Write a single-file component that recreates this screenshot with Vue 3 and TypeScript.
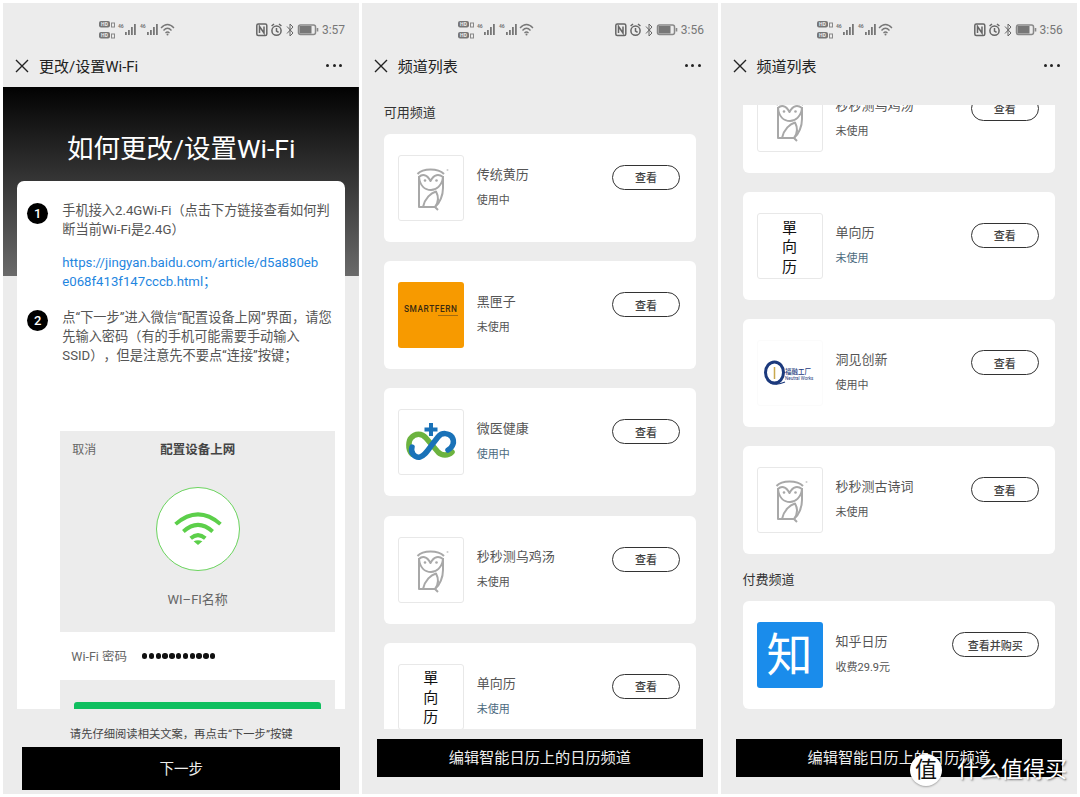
<template>
  <div class="page">
    <section v-for="phone in phones" :key="phone.id" class="phone">
      <div class="status">
        <svg class="status-left" width="76" height="22" viewBox="0 0 76 22">
          <g v-for="y in [2, 13]" :key="y">
            <rect x="0" :y="y" width="11" height="6.5" rx="2" fill="#777" />
            <text x="5.5" :y="y + 5" class="hd">HD</text>
            <rect x="12.5" :y="y + 2" width="3" height="4" fill="none" stroke="#888" stroke-width="1" />
          </g>
          <g v-for="x in [19, 41]" :key="x" fill="#777">
            <text :x="x" y="9" class="net">46</text>
            <rect :x="x + 7" y="13" width="1.8" height="3" />
            <rect :x="x + 10" y="11" width="1.8" height="5" />
            <rect :x="x + 13" y="8" width="1.8" height="8" />
            <rect :x="x + 16" y="5" width="1.8" height="11" />
          </g>
          <g fill="none" stroke="#777" stroke-width="1.3">
            <path d="M62 9 Q68.5 2 75 9" />
            <path d="M64.5 11.5 Q68.5 7 72.5 11.5" />
            <path d="M66.5 14 Q68.5 12 70.5 14" />
          </g>
          <circle cx="68.5" cy="15.5" r="1" fill="#777" />
        </svg>
        <div class="status-right">
          <svg width="64" height="16" viewBox="0 0 64 16">
            <g fill="none" stroke="#666" stroke-width="1.5">
              <rect x="0.8" y="2" width="10" height="11.5" rx="1.5" />
              <path d="M3.5 11 V4.5 L8 11 V4.5" />
              <circle cx="20.5" cy="8.7" r="4.6" />
              <path d="M20.5 6 V9 L22.6 10.4 M15.6 4 L18 2 M25.4 4 L23 2" />
              <path d="M31 4.5 L37 11 L34 14 V2 L37 5 L31 11.5" stroke-width="1" />
              <rect x="42.5" y="3" width="17" height="9.5" rx="2" stroke="#888" />
            </g>
            <rect x="43.5" y="4" width="12" height="7.5" fill="#777" />
            <rect x="60.7" y="6" width="1.6" height="3.5" fill="#888" />
          </svg>
          <span class="time">{{ phone.time }}</span>
        </div>
      </div>

      <header class="titlebar">
        <svg class="close" width="14" height="14" viewBox="0 0 14 14">
          <path d="M1 1 L13 13 M13 1 L1 13" stroke="#222" stroke-width="1.4" fill="none" />
        </svg>
        <span class="title">{{ phone.title }}</span>
        <span class="more"><i></i><i></i><i></i></span>
      </header>

      <div v-if="phone.guide" class="guide">
        <h1 class="guide-title">如何更改/设置Wi-Fi</h1>
        <div class="guide-card">
          <div class="step">
            <span class="badge">1</span>
            <div class="step-text">
              <p>手机接入2.4GWi-Fi（点击下方链接查看如何判断当前Wi-Fi是2.4G）</p>
              <p class="link">https://jingyan.baidu.com/article/d5a880ebe068f413f147cccb.html；</p>
            </div>
          </div>
          <div class="step step-two">
            <span class="badge">2</span>
            <div class="step-text">
              <p>点“下一步”进入微信“配置设备上网”界面，请您先输入密码（有的手机可能需要手动输入SSID），但是注意先不要点“连接”按键；</p>
            </div>
          </div>
          <div class="shot">
            <div class="shot-top">
              <div class="shot-head">
                <span>取消</span>
                <strong>配置设备上网</strong>
                <span></span>
              </div>
              <div class="wifi-circle">
                <svg width="84" height="84" viewBox="0 0 84 84">
                  <g fill="none" stroke="#5ccf4a" stroke-width="4">
                    <path d="M19 37 Q42 17 65 37" />
                    <path d="M27 44.5 Q42 31 57 44.5" />
                    <path d="M34.5 51.5 Q42 45 49.5 51.5" />
                  </g>
                  <path d="M37.5 54.5 Q42 52.5 46.5 54.5 L42 58.5 Z" fill="#5ccf4a" />
                </svg>
              </div>
              <div class="wifi-name">WI–FI名称</div>
            </div>
            <div class="pw-row">
              <span>Wi-Fi 密码</span>
              <span class="pw-dots"><i v-for="n in 11" :key="n"></i></span>
            </div>
            <div class="shot-bottom"><div class="shot-btn"></div></div>
          </div>
        </div>
        <div class="guide-foot">
          <p>请先仔细阅读相关文案，再点击“下一步”按键</p>
          <button class="next">下一步</button>
        </div>
      </div>

      <div v-else class="channels">
        <div class="scroll">
          <div :class="['scroll-inner', { scrolled: phone.scrolled }]">
            <div v-for="(group, g) in phone.groups" :key="g" class="group">
              <h2 v-if="group.heading" class="heading">{{ group.heading }}</h2>
              <div v-for="item in group.items" :key="item.name" class="card">
                <div class="thumb" :class="'thumb-' + item.logo">
                  <svg v-if="item.logo === 'owl'" width="64" height="64" viewBox="1 1 64 64">
                    <g fill="none" stroke="#a8a8a8" stroke-width="2" stroke-linejoin="round">
                      <path d="M19.5 19 C25 13 40 13 46 19" />
                      <path d="M21 21 L21 52 L37 52 C42 48 45 40 45 33 L45 21" />
                      <path d="M21 22 C24 19 29 19 32.5 26 C36 19 41 19 45 22 C44 31 38 35 33 35 C27 35 22 31 21 22 Z" />
                      <path d="M25 52 C27 43 33 38 38 36.5 C41 42 40 48 37 52 L40 55" />
                    </g>
                    <circle cx="27" cy="25.5" r="1.3" fill="#a8a8a8" />
                    <circle cx="38.5" cy="25.5" r="1.3" fill="#a8a8a8" />
                    <circle cx="49.5" cy="15" r="1" fill="#ccc" />
                  </svg>
                  <div v-else-if="item.logo === 'fern'" class="fern">
                    <span>SMARTFERN</span>
                    <i></i>
                  </div>
                  <svg v-else-if="item.logo === 'health'" width="64" height="64" viewBox="1 1 64 64">
                    <g fill="none" stroke-width="5.5" stroke-linecap="round">
                      <path d="M14 45 C9 40 11 31 13 29 C17 24 24 24 28 29 L40 43 C44 47 50 47 54 43" stroke="#6cb33f" />
                      <path d="M14 38 C12 44 17 49 22 48 C26 47 28 44 33 37 L40 28 C44 23 51 24 54 28 C57 33 55 38 50 41" stroke="#1a72b8" />
                    </g>
                    <path d="M31 14 h4 v4.5 h4.5 v4 h-4.5 v4.5 h-4 v-4.5 h-4.5 v-4 h4.5 Z" fill="#1a72b8" />
                  </svg>
                  <div v-else-if="item.logo === 'single'" class="single">
                    <span>單</span><span>向</span><span>历</span>
                  </div>
                  <div v-else-if="item.logo === 'insight'" class="insight">
                    <svg width="22" height="26" viewBox="0 0 22 26">
                      <ellipse cx="10.5" cy="12.5" rx="9" ry="10.5" fill="none" stroke="#1c3a7d" stroke-width="3" />
                      <path d="M10.5 7 V19" stroke="#c9a94e" stroke-width="1.5" />
                      <path d="M3 20 Q10 27 21 22" fill="none" stroke="#1c3a7d" stroke-width="1.2" />
                    </svg>
                    <div class="insight-text">
                      <b>福融工厂</b>
                      <small>Neutral Works</small>
                    </div>
                  </div>
                  <span v-else class="zhi">知</span>
                </div>
                <div class="info">
                  <div class="name">{{ item.name }}</div>
                  <div :class="['state', { tint: item.tint }]">{{ item.state }}</div>
                </div>
                <button class="view">{{ item.action ?? "查看" }}</button>
              </div>
            </div>
          </div>
        </div>
        <div class="channels-foot">
          <button class="edit">编辑智能日历上的日历频道</button>
        </div>
      </div>
    </section>

    <div class="watermark">
      <span class="mark-logo">值</span>
      <span class="mark-text">什么值得买</span>
    </div>
  </div>
</template>

<script setup lang="ts">
interface Channel {
  name: string;
  state: string;
  logo: "owl" | "fern" | "health" | "single" | "insight" | "zhihu";
  action?: string;
  tint?: boolean;
}

interface Group {
  heading?: string;
  items: Channel[];
}

interface Phone {
  id: number;
  time: string;
  title: string;
  guide?: boolean;
  scrolled?: boolean;
  groups: Group[];
}

const phones: Phone[] = [
  { id: 1, time: "3:57", title: "更改/设置Wi-Fi", guide: true, groups: [] },
  {
    id: 2,
    time: "3:56",
    title: "频道列表",
    groups: [
      {
        heading: "可用频道",
        items: [
          { name: "传统黄历", state: "使用中", logo: "owl" },
          { name: "黑匣子", state: "未使用", logo: "fern" },
          { name: "微医健康", state: "使用中", logo: "health", tint: true },
          { name: "秒秒测乌鸡汤", state: "未使用", logo: "owl" },
          { name: "单向历", state: "未使用", logo: "single", tint: true }
        ]
      }
    ]
  },
  {
    id: 3,
    time: "3:56",
    title: "频道列表",
    scrolled: true,
    groups: [
      {
        items: [
          { name: "秒秒测乌鸡汤", state: "未使用", logo: "owl" },
          { name: "单向历", state: "未使用", logo: "single", tint: true },
          { name: "洞见创新", state: "使用中", logo: "insight" },
          { name: "秒秒测古诗词", state: "未使用", logo: "owl" }
        ]
      },
      {
        heading: "付费频道",
        items: [{ name: "知乎日历", state: "收费29.9元", logo: "zhihu", action: "查看并购买" }]
      }
    ]
  }
];
</script>

<style>
html,
body {
  background: #fff;
}
</style>

<style scoped>
.page {
  position: relative;
  display: flex;
  gap: 3px;
  width: 1080px;
  height: 797px;
  padding: 3.3px;
  box-sizing: border-box;
  overflow: hidden;
  font-family: Roboto, "Noto Sans CJK SC", sans-serif;
  color: #333;
  text-spacing-trim: space-all;
}

.phone {
  width: 356px;
  height: 790.3px;
  display: flex;
  flex-direction: column;
  background: #ececec;
  overflow: hidden;
}

.status {
  height: 45px;
  flex: none;
  display: flex;
  align-items: flex-start;
  padding: 15.7px 14px 0 95.7px;
  box-sizing: border-box;
}

.hd {
  font-size: 5px;
  font-weight: 700;
  fill: #eee;
  text-anchor: middle;
}

.net {
  font-size: 5px;
  font-weight: 700;
}

.status-right {
  margin-left: auto;
  display: flex;
  align-items: center;
  gap: 2px;
  margin-top: 3px;
}

.time {
  font-size: 12px;
  line-height: 16px;
  color: #777;
}

.titlebar {
  height: 38.7px;
  flex: none;
  display: flex;
  align-items: center;
  padding: 0 17px 4px 11.7px;
  box-sizing: border-box;
}

.close {
  flex: none;
}

.title {
  margin-left: 10px;
  font-size: 15px;
  color: #222;
}

.more {
  margin-left: auto;
  display: flex;
  gap: 3.5px;
}

.more i {
  width: 3px;
  height: 3px;
  border-radius: 50%;
  background: #222;
}

.guide {
  flex: 1;
  min-height: 0;
  display: flex;
  flex-direction: column;
  background: linear-gradient(#020202, #6a6a6a) top / 100% 189px no-repeat;
}

.guide-title {
  margin: 42px 0 12px;
  font-size: 26.5px;
  line-height: 40px;
  font-weight: 400;
  text-align: center;
  color: #fff;
}

.guide-card {
  flex: 1;
  min-height: 0;
  margin: 0 14px;
  padding: 20px 10px 0;
  background: #fff;
  border-radius: 7px 7px 0 0;
  overflow: hidden;
}

.step {
  display: flex;
  gap: 14px;
}

.step-two {
  margin-top: 17px;
}

.badge {
  flex: none;
  width: 21px;
  height: 21px;
  margin-top: 2px;
  border-radius: 50%;
  background: #000;
  color: #fff;
  font-size: 13px;
  font-weight: 500;
  line-height: 21px;
  text-align: center;
}

.step-text {
  flex: 1;
  min-width: 0;
  font-size: 13.2px;
  line-height: 19px;
  color: #555;
}

.step-text p {
  margin: 0;
  padding-right: 2px;
}

.step-text .link {
  margin-top: 14px;
  padding-right: 15px;
  color: #1f86e0;
  word-break: break-all;
}

.shot {
  margin: 66px 0 0 33px;
}

.shot-top {
  height: 201px;
  padding: 11px 12px 0;
  box-sizing: border-box;
  background: #ececec;
  display: flex;
  flex-direction: column;
  align-items: center;
}

.shot-head {
  width: 100%;
  display: grid;
  grid-template-columns: 1fr auto 1fr;
  font-size: 12px;
  line-height: 16px;
  color: #666;
}

.shot-head strong {
  color: #444;
  font-size: 12.5px;
  font-weight: 700;
}

.wifi-circle {
  width: 84px;
  height: 84px;
  margin-top: 29px;
  border: 1.5px solid #6bd45e;
  border-radius: 50%;
  background: #fff;
  box-sizing: border-box;
  display: flex;
  align-items: center;
  justify-content: center;
  flex: none;
}

.wifi-name {
  margin-top: 20px;
  font-size: 13px;
  line-height: 18px;
  color: #666;
}

.pw-row {
  height: 48px;
  padding-left: 11px;
  display: flex;
  align-items: center;
  gap: 14px;
  font-size: 12.5px;
  color: #666;
}

.pw-dots {
  display: flex;
  gap: 1.3px;
  margin-left: 1px;
}

.pw-dots i {
  width: 5.5px;
  height: 5.5px;
  border-radius: 50%;
  background: #111;
}

.shot-bottom {
  height: 40px;
  padding: 22px 14px 0;
  box-sizing: border-box;
  background: #ececec;
}

.shot-btn {
  height: 30px;
  border-radius: 3px;
  background: #0fbf5f;
}

.guide-foot {
  flex: none;
  height: 84.3px;
  padding: 18px 19px 3.3px;
  box-sizing: border-box;
  display: flex;
  flex-direction: column;
  background: #ececec;
}

.guide-foot p {
  margin: 0 0 4px;
  font-size: 11.3px;
  line-height: 16px;
  text-align: center;
  color: #444;
}

.next,
.edit {
  display: block;
  width: 100%;
  border: 0;
  background: #000;
  color: #eee;
  font-family: inherit;
  padding: 0 0 3px;
}

.next {
  height: 43px;
  font-size: 14.5px;
}

.channels {
  flex: 1;
  min-height: 0;
  display: flex;
  flex-direction: column;
}

.scroll {
  height: 624px;
  flex: none;
  margin-top: 18px;
  overflow: hidden;
}

.scroll-inner {
  padding: 0 22px 0 21.7px;
}

.scrolled {
  margin-top: -40.3px;
}

.group + .group {
  margin-top: -1.4px;
}

.heading {
  margin: 0 0 13px;
  font-size: 13px;
  line-height: 16px;
  font-weight: 400;
  color: #333;
}

.card {
  height: 108px;
  margin-bottom: 19.2px;
  padding: 21px 16px 0 14px;
  box-sizing: border-box;
  display: flex;
  align-items: flex-start;
  background: #fff;
  border-radius: 6px;
}

.thumb {
  width: 66px;
  height: 66px;
  flex: none;
  box-sizing: border-box;
  border: 1px solid #e8e8e8;
  border-radius: 3px;
  display: flex;
  align-items: center;
  justify-content: center;
  overflow: hidden;
}

.thumb-fern {
  background: #f79a00;
  border: 0;
}

.fern {
  display: flex;
  flex-direction: column;
  align-items: flex-end;
  padding-bottom: 9px;
}

.fern span {
  font-size: 8.3px;
  line-height: 9px;
  font-weight: 500;
  letter-spacing: 0.6px;
  color: #3a2a10;
  white-space: nowrap;
}

.fern i {
  width: 20px;
  height: 1px;
  margin-top: 1px;
  background: #a06a10;
}

.single {
  display: flex;
  flex-direction: column;
  font-family: "Noto Sans CJK TC", sans-serif;
  font-size: 15px;
  line-height: 19.5px;
  color: #111;
}

.thumb-insight {
  border-color: #fbfbfb;
}

.insight {
  display: flex;
  align-items: center;
  color: #1c3a7d;
}

.insight-text {
  display: flex;
  flex-direction: column;
  margin-left: -1px;
  margin-top: 3px;
  width: 30px;
}

.insight-text b {
  font-size: 6.5px;
  line-height: 8px;
  font-weight: 500;
  white-space: nowrap;
}

.insight-text small {
  font-size: 4.5px;
  line-height: 6px;
  white-space: nowrap;
}

.thumb-zhihu {
  background: #1a8ceb;
  border: 0;
}

.zhi {
  font-size: 46px;
  line-height: 64px;
  color: #fff;
  font-weight: 400;
}

.info {
  margin-left: 13px;
  padding-top: 12px;
}

.name {
  font-size: 13px;
  line-height: 16px;
  color: #555;
}

.state {
  margin-top: 10px;
  font-size: 11px;
  line-height: 16px;
  color: #555;
}

.state.tint {
  color: #4d6b80;
}

.view {
  margin: 10px 0 0 auto;
  min-width: 68px;
  height: 25px;
  padding: 0 15px;
  box-sizing: border-box;
  border: 1.5px solid #333;
  border-radius: 13px;
  background: #fff;
  font-family: inherit;
  font-size: 11px;
  font-weight: 500;
  color: #444;
}

.channels-foot {
  padding: 10px 15px 0 14.7px;
}

.edit {
  height: 38px;
  font-size: 15.2px;
}

.watermark {
  position: absolute;
  left: 910px;
  top: 754px;
  display: flex;
  align-items: center;
  gap: 15px;
}

.mark-logo {
  width: 32px;
  height: 32px;
  border-radius: 50%;
  background: #fff;
  color: #111;
  font-size: 22px;
  line-height: 32px;
  text-align: center;
  box-shadow: 0 1px 2px rgba(0, 0, 0, 0.3);
}

.mark-text {
  font-size: 22px;
  line-height: 32px;
  color: #fff;
  text-shadow: 1px 1px 2px rgba(0, 0, 0, 0.55);
  white-space: nowrap;
}
</style>
